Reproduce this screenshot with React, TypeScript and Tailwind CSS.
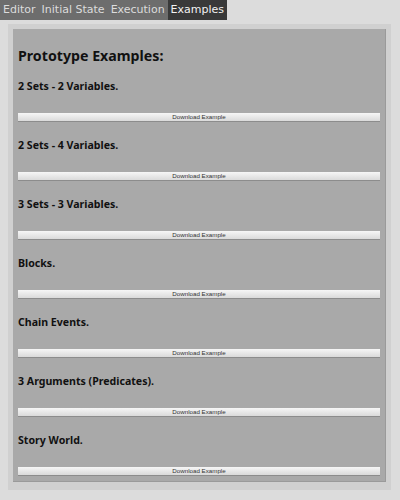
import React from "react"

const tabs = ["Editor", "Initial State", "Execution", "Examples"]

const examples = [
  "2 Sets - 2 Variables.",
  "2 Sets - 4 Variables.",
  "3 Sets - 3 Variables.",
  "Blocks.",
  "Chain Events.",
  "3 Arguments (Predicates).",
  "Story World.",
]

const App = () => {
  return (
    <div className="min-h-[500px] w-[400px] bg-[#dcdcdc] font-['DejaVu_Sans',sans-serif]">
      <nav className="flex h-5 w-fit bg-[#6d6d6d] text-[11px] leading-5">
        {tabs.map((tab) => (
          <span
            key={tab}
            className={
              tab === "Examples"
                ? "bg-[#393939] px-[3px] text-[#f2f2f2]"
                : "px-[3px] text-[#dcdcdc]"
            }
          >
            {tab}
          </span>
        ))}
      </nav>

      <div className="ml-2 mr-[9px] mt-1 bg-[#d0d0d0] px-[5px] pb-[8px] pt-[5px]">
        <div className="border-b border-r border-[#9a9a9a] bg-[#a9a9a9] px-[5px] pb-[5px] pt-[18px]">
          <h1 className="font-['Noto_Sans',sans-serif] text-[14.2px] font-bold leading-[18px] text-[#111]">
            Prototype Examples:
          </h1>
          <div className="mt-[14px] flex flex-col gap-4">
            {examples.map((name) => (
              <section key={name}>
                <h3 className={styles.sectionTitle}>{name}</h3>
                <button className={styles.button}>Download Example</button>
              </section>
            ))}
          </div>
        </div>
      </div>
    </div>
  )
}

const styles = {
  sectionTitle:
    "font-['Noto_Sans',sans-serif] text-[10.6px] font-bold leading-[14px] text-[#111]",
  button:
    "mt-5 block h-[9px] w-full border-b border-[#8c8c8c] bg-gradient-to-b from-[#f6f6f6] to-[#dadada] font-['Liberation_Sans',sans-serif] text-[6.2px] leading-[8px] text-[#333]",
}

export default App
